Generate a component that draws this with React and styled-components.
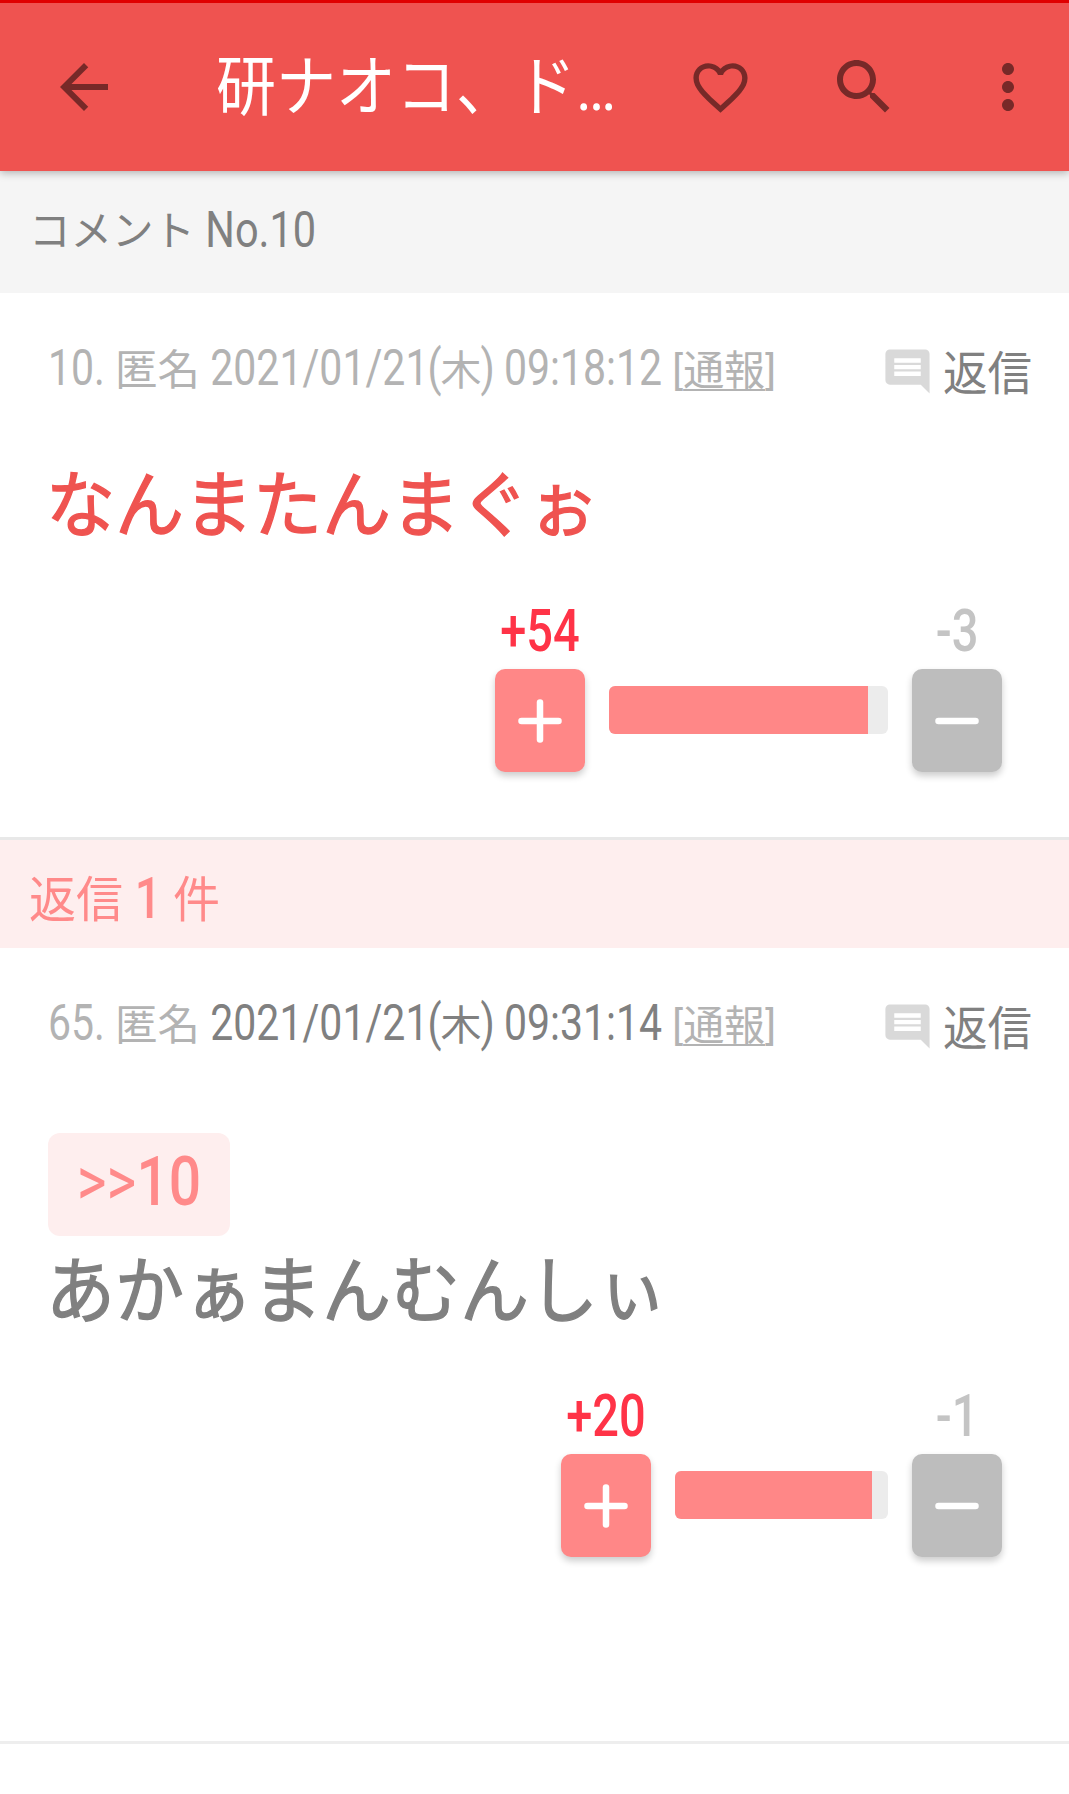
import styled, { createGlobalStyle } from "styled-components";

const GlobalStyle = createGlobalStyle`
  html, body {
    margin: 0;
    padding: 0;
    background: #fff;
    overflow-x: hidden;
  }
  * {
    box-sizing: border-box;
  }
`;

const Page = styled.div`
  min-height: 1794px;
  background: #fff;
  font-family: Roboto, "Noto Sans CJK JP", sans-serif;
  color: #808080;
`;

const Header = styled.header`
  position: relative;
  z-index: 1;
  display: flex;
  align-items: center;
  height: 171px;
  border-top: 3px solid #e00000;
  background: #ef5350;
  box-shadow: 0 2px 8px rgba(0, 0, 0, 0.28);
`;

const IconButton = styled.div`
  display: flex;
  flex: none;
  align-items: center;
  justify-content: center;
  width: ${(p) => p.$width || 144}px;
  height: 100%;
  color: rgba(0, 0, 0, 0.5);
`;

const Title = styled.h1`
  flex: 1;
  min-width: 0;
  margin: 0;
  padding: 6px 0 0 48px;
  font-size: 60px;
  font-weight: 400;
  line-height: 80px;
  color: #fff;
  white-space: nowrap;
  overflow: hidden;
`;

const Actions = styled.div`
  display: flex;
  flex: none;
  height: 100%;
  margin-right: -11px;
`;

const SectionBar = styled.div`
  display: flex;
  align-items: center;
  height: ${(p) => p.$height}px;
  padding: ${(p) => p.$drop || 0}px 0 ${(p) => p.$lift || 0}px 29px;
  font-size: ${(p) => p.$size}px;
  background: ${(p) => p.$bg};
  color: ${(p) => p.$color};
`;

// the latin glyphs in the shot are narrow and tall, so stretch them
const Tall = styled.span`
  display: inline-block;
  transform: scaleY(${(p) => p.$scale || 1.2});
  transform-origin: 50% 70%;
  color: ${(p) => p.$color || "inherit"};
`;

const Paren = styled(Tall)`
  margin: 0 -1px;
`;

const Heavy = styled(Tall)`
  font-weight: 500;
`;

const Kanji = styled.span`
  font-size: 42.5px;
`;

const Card = styled.section`
  padding: 48px 0 ${(p) => p.$bottom}px 48px;
  border-bottom: 3px solid ${(p) => p.$line};
`;

const MetaRow = styled.div`
  display: flex;
  align-items: center;
  justify-content: space-between;
  height: 60px;
  padding-right: 37px;
`;

const MetaText = styled.div`
  font-size: 41px;
  line-height: 60px;
  color: #b3b3b3;
  white-space: nowrap;
`;

const ReportLink = styled.span`
  text-decoration: underline;
  text-decoration-thickness: 2px;
  text-underline-offset: 4px;
`;

const ReplyButton = styled.div`
  display: flex;
  align-items: center;
  font-size: 44.5px;
  line-height: 60px;
  color: #808080;

  svg {
    margin-right: 9px;
    color: #d9d9d9;
  }
`;

const ReplyLabel = styled.span`
  display: inline-block;
  transform: translateY(3px) scaleY(1.06);
`;

const Body = styled.p`
  margin: ${(p) => p.$top}px 0 0 -2px;
  font-size: 69px;
  font-weight: 400;
  line-height: 100px;
  color: ${(p) => p.$color};
  -webkit-text-stroke: 1.3px ${(p) => p.$color};
  transform: scaleY(1.05);
`;

const Chip = styled.div`
  display: inline-flex;
  align-items: center;
  justify-content: center;
  width: 182px;
  height: 103px;
  margin-top: 77px;
  border-radius: 12px;
  background: #feeeee;
  font-size: 57px;
  color: #ff8a8a;
`;

const Votes = styled.div`
  display: grid;
  grid-template-columns: 90px ${(p) => p.$bar}px 90px;
  justify-content: end;
  column-gap: 24px;
  row-gap: 9px;
  margin-top: ${(p) => p.$top}px;
  padding-right: 67px;
`;

const Count = styled.div`
  grid-column: ${(p) => p.$col};
  grid-row: 1;
  padding-top: 7px;
  font-size: 47px;
  font-weight: 500;
  line-height: 53px;
  text-align: center;
  color: ${(p) => p.$color};
`;

const VoteButton = styled.div`
  grid-column: ${(p) => p.$col};
  grid-row: 2;
  display: flex;
  align-items: center;
  justify-content: center;
  height: 103px;
  border-radius: 10px;
  background: ${(p) => p.$bg};
  color: #fff;
  box-shadow: 0 4px 7px rgba(0, 0, 0, 0.2);
`;

const BarTrack = styled.div`
  grid-column: 2;
  grid-row: 2;
  height: 48px;
  margin-top: 17px;
  border-radius: 6px;
  overflow: hidden;
  background: #ececec;
`;

const BarFill = styled.div`
  height: 100%;
  background: #ff8787;
`;

const Icon = ({ d, size = 72 }) => (
  <svg width={size} height={size} viewBox="0 0 24 24" fill="currentColor">
    <path d={d} />
  </svg>
);

const PlusMark = ({ minus }) => (
  <svg width="44" height="44" viewBox="0 0 44 44" stroke="currentColor" strokeWidth="6.5" strokeLinecap="round">
    <line x1="3.5" y1="22" x2="40.5" y2="22" />
    {!minus && <line x1="22" y1="3.5" x2="22" y2="40.5" />}
  </svg>
);

const ICONS = {
  back: "M20 11H7.83l5.59-5.59L12 4l-8 8 8 8 1.41-1.41L7.83 13H20v-2z",
  heart:
    "M16.5 3c-1.74 0-3.41.81-4.5 2.09C10.91 3.81 9.24 3 7.5 3 4.42 3 2 5.42 2 8.5c0 3.78 3.4 6.86 8.55 11.54L12 21.35l1.45-1.32C18.6 15.36 22 12.28 22 8.5 22 5.42 19.58 3 16.5 3zm-4.4 15.55l-.1.1-.1-.1C7.14 14.24 4 11.39 4 8.5 4 6.5 5.5 5 7.5 5c1.54 0 3.04.99 3.57 2.36h1.87C13.46 5.99 14.96 5 16.5 5c2 0 3.5 1.5 3.5 3.5 0 2.89-3.14 5.74-7.9 10.05z",
  search:
    "M15.5 14h-.79l-.28-.27C15.41 12.59 16 11.11 16 9.5 16 5.91 13.09 3 9.5 3S3 5.91 3 9.5 5.91 16 9.5 16c1.61 0 3.09-.59 4.23-1.57l.27.28v.79l5 4.99L20.49 19l-4.99-5zm-6 0C7.01 14 5 11.99 5 9.5S7.01 5 9.5 5 14 7.01 14 9.5 11.99 14 9.5 14z",
  more: "M12 8c1.1 0 2-.9 2-2s-.9-2-2-2-2 .9-2 2 .9 2 2 2zm0 2c-1.1 0-2 .9-2 2s.9 2 2 2 2-.9 2-2-.9-2-2-2zm0 6c-1.1 0-2 .9-2 2s.9 2 2 2 2-.9 2-2-.9-2-2-2z",
  comment:
    "M21.99 4c0-1.1-.89-2-1.99-2H4c-1.1 0-2 .9-2 2v12c0 1.1.9 2 2 2h14l4 4-.01-18zM18 14H6v-2h12v2zm0-3H6V9h12v2zm0-3H6V6h12v2z",
};

const Meta = ({ no, date, time, dateColor }) => (
  <MetaRow>
    <MetaText>
      <Tall>{no}.</Tall> <Kanji>匿名</Kanji> <Tall $color={dateColor}>{date}</Tall>
      <Paren $color={dateColor}>(</Paren>
      <Tall $scale={1} $color={dateColor}>木</Tall>
      <Paren $color={dateColor}>)</Paren> <Tall $color={dateColor}>{time}</Tall>{" "}
      <Tall $scale={1}>[</Tall>
      <ReportLink>通報</ReportLink>
      <Tall $scale={1}>]</Tall>
    </MetaText>
    <ReplyButton>
      <Icon d={ICONS.comment} size={53} />
      <ReplyLabel>返信</ReplyLabel>
    </ReplyButton>
  </MetaRow>
);

const VoteBar = ({ up, down, bar, fill, top }) => (
  <Votes $bar={bar} $top={top}>
    <Count $col={1} $color="#ff3347">
      <Tall $scale={1.25}>+{up}</Tall>
    </Count>
    <Count $col={3} $color="#c4c4c4">
      <Tall $scale={1.25}>-{down}</Tall>
    </Count>
    <VoteButton $col={1} $bg="#ff8787">
      <PlusMark />
    </VoteButton>
    <BarTrack>
      <BarFill style={{ width: `${fill}%` }} />
    </BarTrack>
    <VoteButton $col={3} $bg="#bdbdbd">
      <PlusMark minus />
    </VoteButton>
  </Votes>
);

export default function App() {
  return (
    <Page>
      <GlobalStyle />
      <Header>
        <IconButton $width={168}>
          <Icon d={ICONS.back} />
        </IconButton>
        <Title>
          <Tall $scale={1.1}>研ナオコ、ド…</Tall>
        </Title>
        <Actions>
          <IconButton>
            <Icon d={ICONS.heart} size={65} />
          </IconButton>
          <IconButton>
            <Icon d={ICONS.search} />
          </IconButton>
          <IconButton>
            <Icon d={ICONS.more} />
          </IconButton>
        </Actions>
      </Header>

      <SectionBar $height={122} $lift={9} $size={41.5} $bg="#f5f5f5" $color="#808080">
        <span>
          コメント <Tall>No.10</Tall>
        </span>
      </SectionBar>

      <Card $bottom={65} $line="#e8e8e8">
        <Meta no="10" date="2021/01/21" time="09:18:12" />
        <Body $top={56} $color="#ef5350">
          なんまたんまぐぉ
        </Body>
        <VoteBar up={54} down={3} bar={279} fill={92.8} top={43} />
      </Card>

      <SectionBar $height={108} $drop={4} $size={47} $bg="#feeeee" $color="#ff8a8a">
        <Tall $scale={1.05}>
          返信 <Heavy $scale={1.15}>1</Heavy> 件
        </Tall>
      </SectionBar>

      <Card $bottom={184} $line="#eeeeee">
        <Meta no="65" date="2021/01/21" time="09:31:14" dateColor="#808080" />
        <Chip>
          <Tall $scale={1.2}>&gt;&gt;</Tall>
          <Heavy $scale={1.2}>10</Heavy>
        </Chip>
        <Body $top={7} $color="#808080">
          あかぁまんむんしぃ
        </Body>
        <VoteBar up={20} down={1} bar={213} fill={92.5} top={42} />
      </Card>
    </Page>
  );
}
